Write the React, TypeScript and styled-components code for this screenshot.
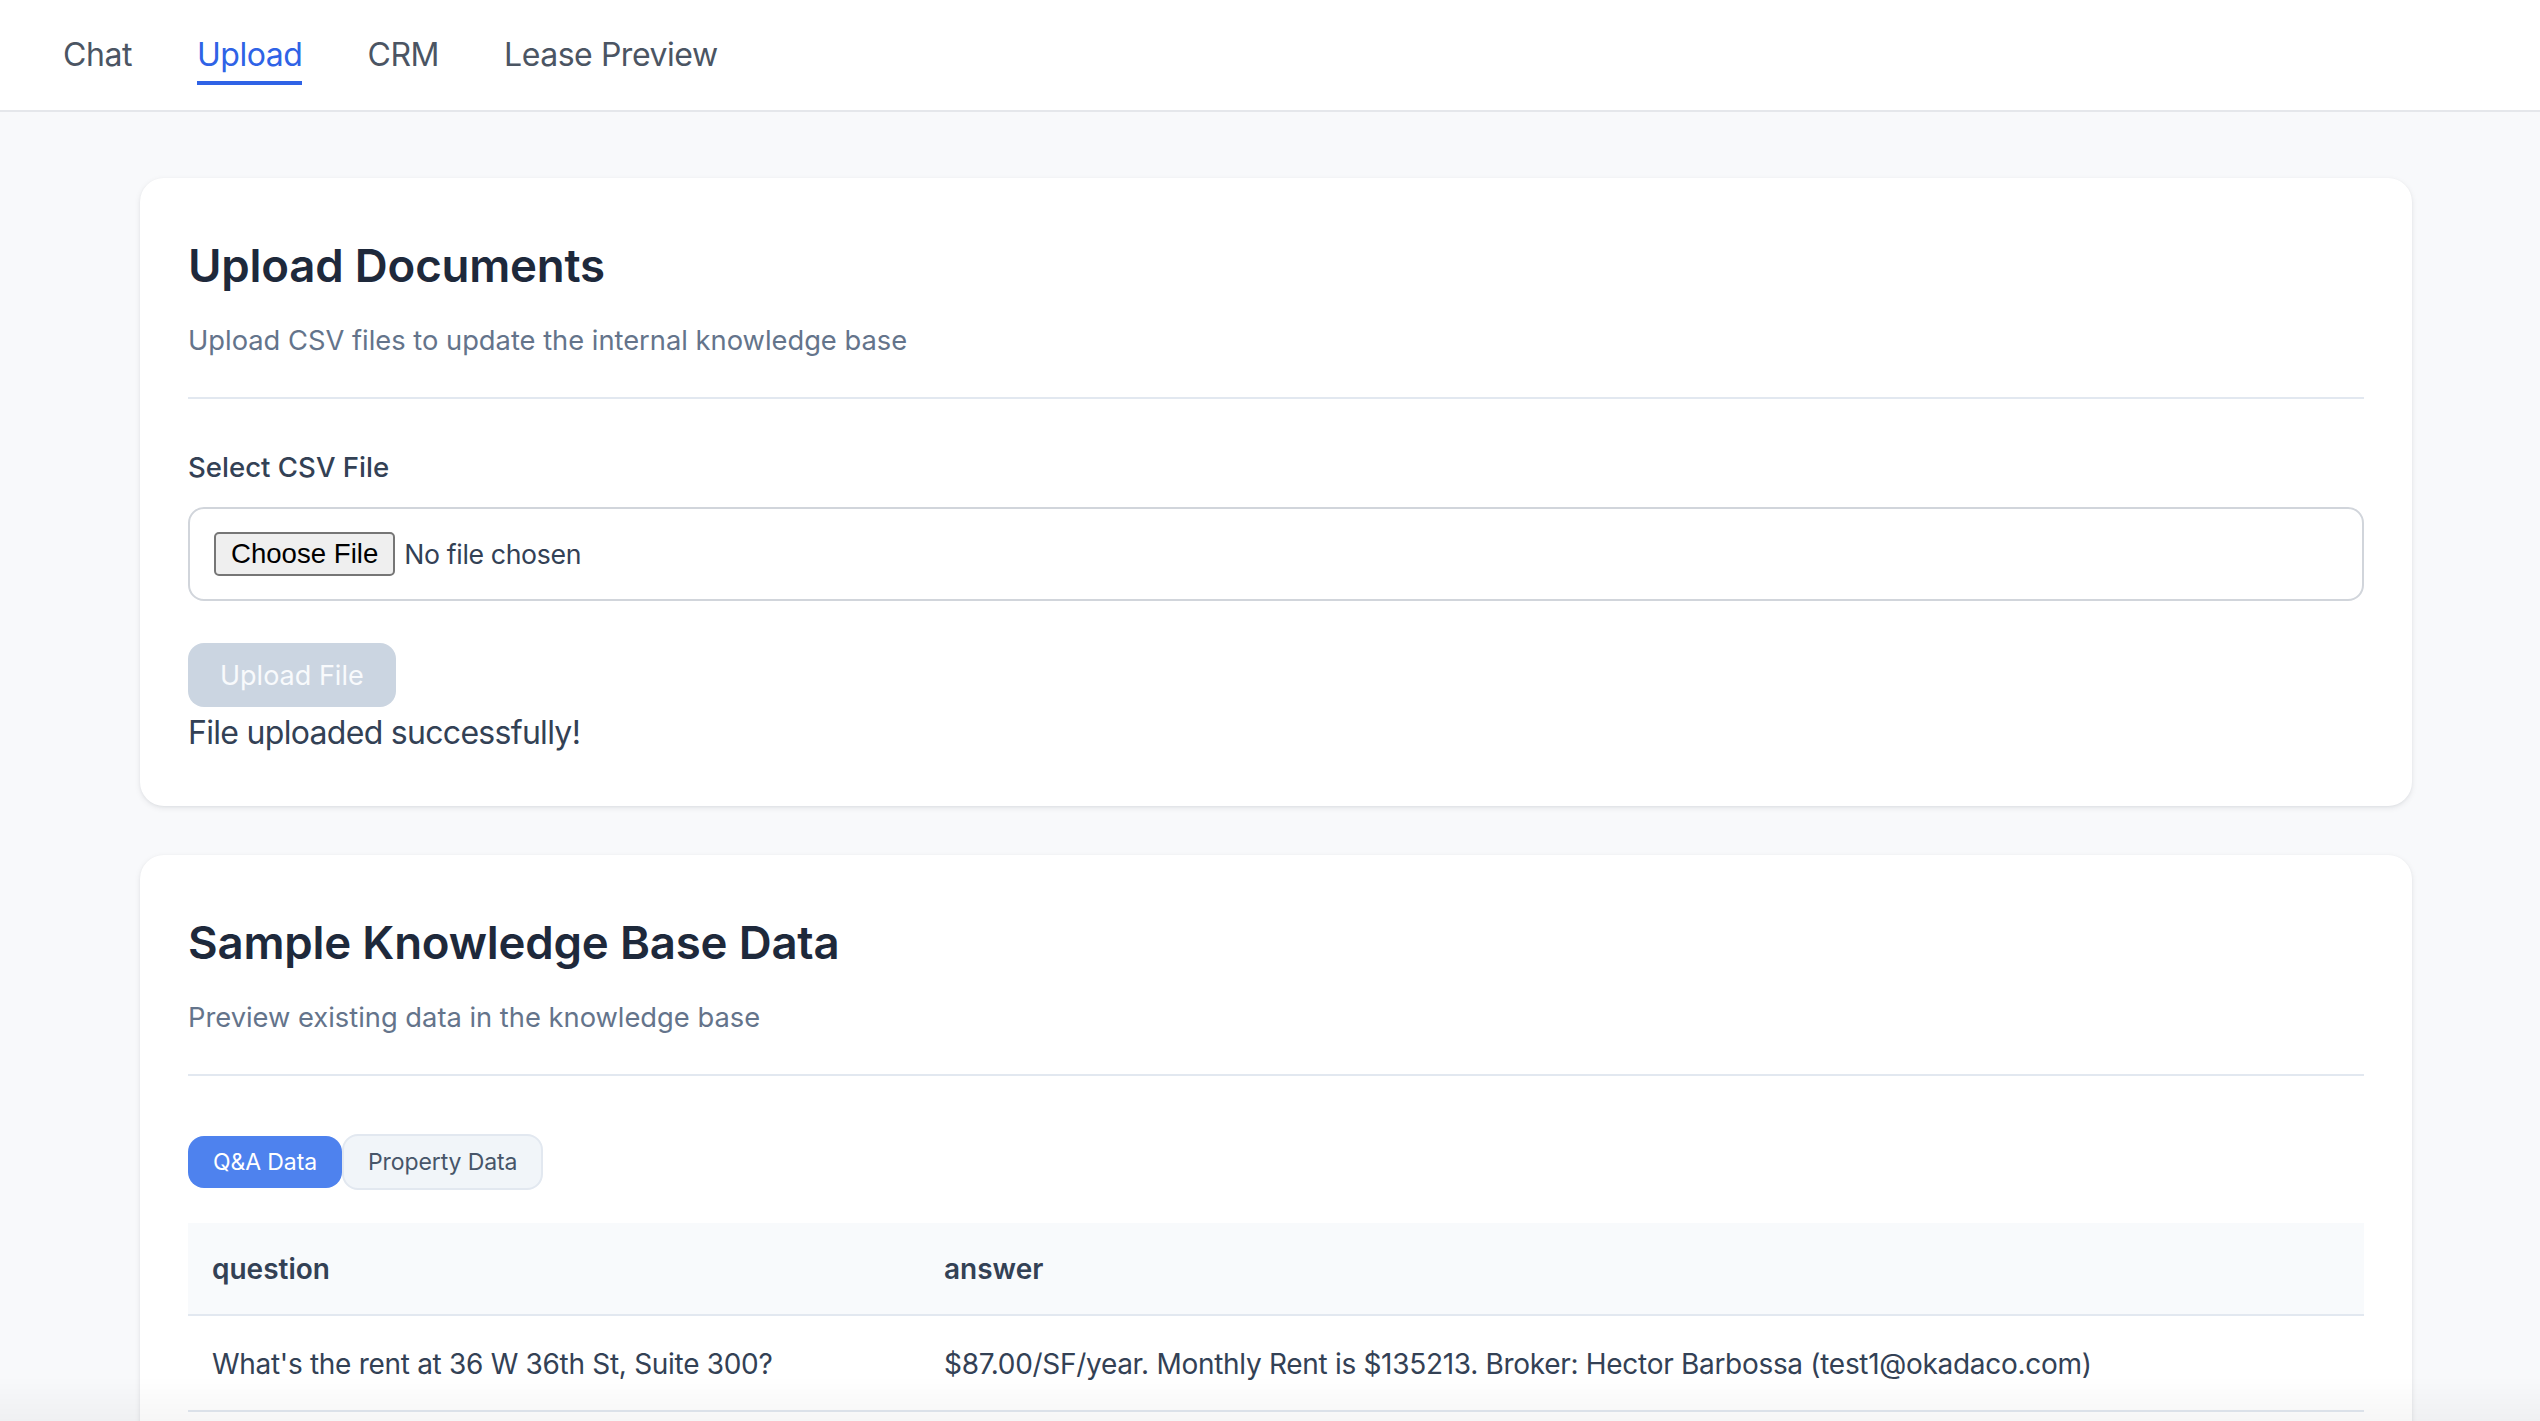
import React from "react";
import styled, { createGlobalStyle, css } from "styled-components";

const GlobalStyle = createGlobalStyle`
  html, body {
    margin: 0;
    padding: 0;
    background: #f8f9fb;
    font-family: Inter, "Noto Sans", "Liberation Sans", sans-serif;
    overflow: hidden;
  }
  * { box-sizing: border-box; }
`;

const Page = styled.div`
  min-height: 100vh;
  background: #f8f9fb;
`;

const Nav = styled.nav`
  display: flex;
  align-items: flex-start;
  gap: 65px;
  height: 112px;
  padding: 31px 0 0 63px;
  background: #ffffff;
  border-bottom: 2px solid #e5e7eb;
`;

const NavTab = styled.button<{ $active?: boolean }>`
  font-family: inherit;
  font-size: 32px;
  line-height: 48px;
  letter-spacing: -0.45px;
  padding: 0 0 2px;
  background: none;
  border: none;
  border-bottom: 4px solid transparent;
  color: #4b5563;
  cursor: pointer;
  ${(p) =>
    p.$active &&
    css`
      color: #2f63e6;
      border-bottom-color: #2f63e6;
    `}
`;

const Main = styled.main`
  display: flex;
  flex-direction: column;
  gap: 49px;
  padding: 66px 128px 0 140px;
`;

const Card = styled.section`
  background: #ffffff;
  border-radius: 24px;
  box-shadow: 0 2px 6px rgba(15, 23, 42, 0.08), 0 1px 3px rgba(15, 23, 42, 0.05);
  padding: 60px 48px 50px;
  display: flex;
  flex-direction: column;
`;

const CardHeader = styled.header`
  padding-bottom: 36px;
  border-bottom: 2px solid #e2e8f0;
`;

const Title = styled.h2`
  margin: 0;
  font-size: 45.6px;
  line-height: 56px;
  font-weight: 600;
  color: #1e293b;
  letter-spacing: -0.2px;
`;

const Subtitle = styled.p`
  margin: 27px 0 0;
  font-size: 27.3px;
  line-height: 40px;
  color: #64748b;
`;

const Field = styled.div`
  margin-top: 48px;
  display: flex;
  flex-direction: column;
`;

const Label = styled.label`
  font-size: 27.6px;
  line-height: 40px;
  font-weight: 500;
  color: #334155;
  margin-bottom: 20px;
`;

const FileBox = styled.div`
  display: flex;
  align-items: center;
  gap: 9px;
  height: 94px;
  padding: 0 24px;
  border: 2px solid #d1d5db;
  border-radius: 16px;
`;

const ChooseButton = styled.button`
  font-family: "Liberation Sans", Arial, sans-serif;
  font-size: 27.6px;
  height: 44px;
  padding: 0 15px;
  background: #efefef;
  color: #000;
  border: 2px solid #767676;
  border-radius: 5px;
`;

const NoFile = styled.span`
  font-size: 26.67px;
  letter-spacing: -0.35px;
  color: #334155;
`;

const UploadButton = styled.button`
  align-self: flex-start;
  margin-top: 42px;
  height: 64px;
  padding: 0 32px;
  font-family: inherit;
  font-size: 27px;
  background: #cbd5e1;
  color: #f8fafc;
  border: none;
  border-radius: 16px;
`;

const Success = styled.p`
  margin: 3px 0 0;
  font-size: 32px;
  line-height: 46px;
  letter-spacing: -0.7px;
  color: #334155;
`;

const Tabs = styled.div`
  display: flex;
  align-items: center;
  margin-top: 58px;
`;

const DataTab = styled.button<{ $active?: boolean }>`
  font-family: inherit;
  font-size: 23px;
  letter-spacing: -0.1px;
  border-radius: 16px;
  cursor: pointer;
  ${(p) =>
    p.$active
      ? css`
          height: 52px;
          padding: 0 25px;
          background: #4e82ee;
          color: #ffffff;
          border: none;
        `
      : css`
          height: 56px;
          padding: 0 24px;
          background: #f1f5f9;
          color: #475569;
          border: 2px solid #e2e8f0;
        `}
`;

const Table = styled.table`
  margin-top: 33px;
  width: 100%;
  border-collapse: collapse;
`;

const Th = styled.th`
  text-align: left;
  padding: 25px 24px 24px;
  font-size: 28px;
  line-height: 42px;
  font-weight: 600;
  color: #334155;
  background: #f8fafc;
  border-bottom: 2px solid #e2e8f0;
`;

const Td = styled.td`
  padding: 25px 24px 23px;
  font-size: 28px;
  line-height: 46px;
  letter-spacing: -0.3px;
  color: #334155;
  border-bottom: 2px solid #e2e8f0;
`;

const BottomFade = styled.div`
  position: fixed;
  left: 0;
  right: 0;
  bottom: 0;
  height: 44px;
  pointer-events: none;
  background: linear-gradient(to bottom, rgba(0, 0, 0, 0), rgba(0, 0, 0, 0.035));
`;

const navItems = ["Chat", "Upload", "CRM", "Lease Preview"];

export default function App() {
  return (
    <Page>
      <GlobalStyle />
      <Nav>
        {navItems.map((n) => (
          <NavTab key={n} $active={n === "Upload"}>
            {n}
          </NavTab>
        ))}
      </Nav>
      <Main>
        <Card>
          <CardHeader>
            <Title>Upload Documents</Title>
            <Subtitle>Upload CSV files to update the internal knowledge base</Subtitle>
          </CardHeader>
          <Field>
            <Label>Select CSV File</Label>
            <FileBox>
              <ChooseButton type="button">Choose File</ChooseButton>
              <NoFile>No file chosen</NoFile>
            </FileBox>
          </Field>
          <UploadButton type="button" disabled>
            Upload File
          </UploadButton>
          <Success>File uploaded successfully!</Success>
        </Card>
        <Card>
          <CardHeader>
            <Title>Sample Knowledge Base Data</Title>
            <Subtitle>Preview existing data in the knowledge base</Subtitle>
          </CardHeader>
          <Tabs>
            <DataTab $active>Q&amp;A Data</DataTab>
            <DataTab>Property Data</DataTab>
          </Tabs>
          <Table>
            <colgroup>
              <col style={{ width: "732px" }} />
              <col />
            </colgroup>
            <thead>
              <tr>
                <Th>question</Th>
                <Th>answer</Th>
              </tr>
            </thead>
            <tbody>
              <tr>
                <Td>What's the rent at 36 W 36th St, Suite 300?</Td>
                <Td>
                  $87.00/SF/year. Monthly Rent is $135213. Broker: Hector Barbossa (test1@okadaco.com)
                </Td>
              </tr>
            </tbody>
          </Table>
        </Card>
      </Main>
      <BottomFade />
    </Page>
  );
}
